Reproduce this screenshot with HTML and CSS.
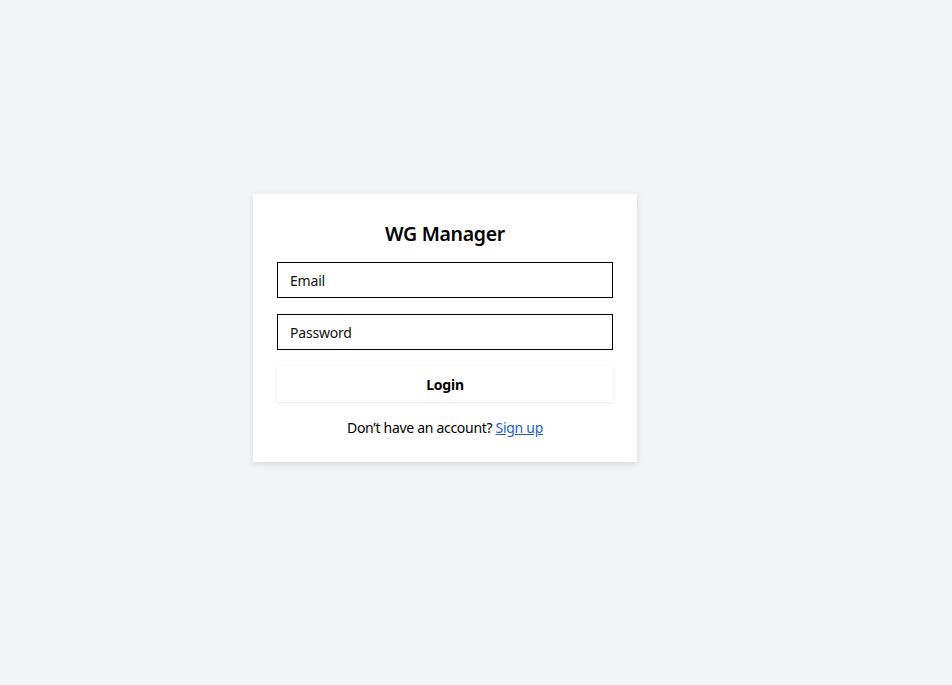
FILE: index.html
```html
<!DOCTYPE html>
<html lang="en">
<head>
<meta charset="utf-8">
<title>WG Manager</title>
<link rel="stylesheet" href="styles.css">
</head>
<body>
<main class="page">
  <form class="card">
    <h1 class="title">WG Manager</h1>
    <input class="field" type="email" placeholder="Email">
    <input class="field" type="password" placeholder="Password">
    <button class="btn" type="button">Login</button>
    <p class="footer">Don’t have an account? <a href="#" class="link">Sign up</a></p>
  </form>
</main>
</body>
</html>
```
FILE: styles.css
```css
html, body {
  margin: 0;
  padding: 0;
  background: #f3f4f6;
  font-family: "Noto Sans", "Open Sans", sans-serif;
  color: #111;
}
.page {
  min-height: 685px;
  box-sizing: border-box;
  padding: 194px 0 0 253px;
  display: flex;
  align-items: flex-start;
}
.card {
  width: 384px;
  box-sizing: border-box;
  background: #fff;
  padding: 24px;
  display: flex;
  flex-direction: column;
  gap: 16px;
  box-shadow: 0 2px 6px rgba(0, 0, 0, 0.12);
}
.title {
  margin: 0;
  padding-top: 3px;
  font-size: 19.5px;
  line-height: 25px;
  letter-spacing: -0.3px;
  font-weight: 600;
  text-align: center;
  color: #000;
}
.field {
  height: 36px;
  box-sizing: border-box;
  border: 1px solid #000;
  padding: 0 12px;
  font: inherit;
  font-size: 14px;
  letter-spacing: -0.2px;
  color: #000;
  outline: none;
  background: #fff;
}
.field::placeholder {
  color: #111;
  opacity: 1;
}
.btn {
  height: 36px;
  border: none;
  background: #fff;
  box-shadow: 0 1px 3px rgba(0, 0, 0, 0.1);
  font: inherit;
  font-size: 14px;
  letter-spacing: -0.2px;
  font-weight: 700;
  color: #000;
  cursor: pointer;
}
.footer {
  margin: 0;
  font-size: 14px;
  line-height: 20px;
  letter-spacing: -0.3px;
  text-align: center;
  color: #000;
}
.link {
  color: #1c5fc9;
  text-decoration: underline;
}
```
